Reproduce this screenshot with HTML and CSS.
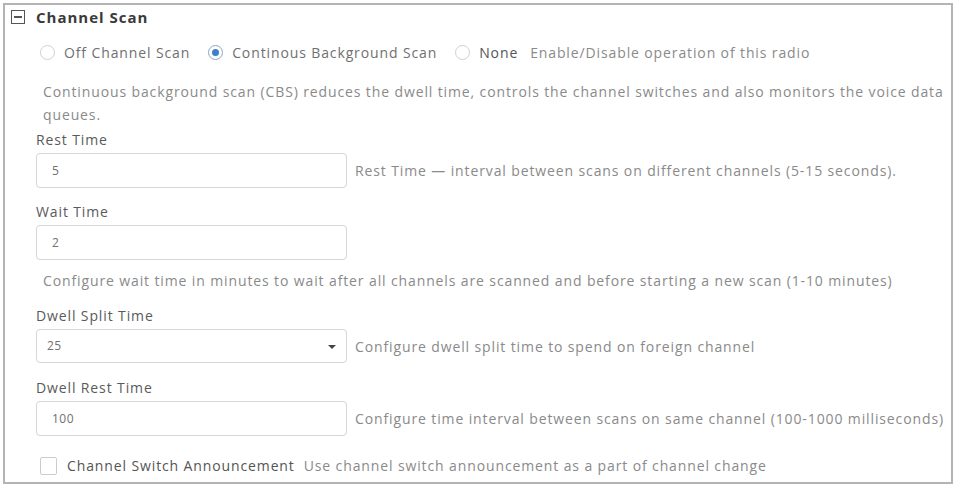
FILE: index.html
```html
<!DOCTYPE html>
<html>
<head>
<meta charset="utf-8">
<link rel="stylesheet" href="styles.css">
</head>
<body>
<div class="panel">
  <div class="header">
    <span class="toggle"><span class="toggle-bar"></span></span>
    <span class="title">Channel Scan</span>
  </div>
  <div class="radio-row">
    <label class="radio"><span class="radio-dot"></span><span class="radio-text">Off Channel Scan</span></label>
    <label class="radio"><span class="radio-dot checked"></span><span class="radio-text">Continous Background Scan</span></label>
    <label class="radio"><span class="radio-dot"></span><span class="radio-text strong">None</span></label>
    <span class="hint">Enable/Disable operation of this radio</span>
  </div>
  <p class="desc">Continuous background scan (CBS) reduces the dwell time, controls the channel switches and also monitors the voice data queues.</p>

  <div class="field">
    <div class="label">Rest Time</div>
    <div class="control-row">
      <div class="input">5</div>
      <span class="hint">Rest Time — interval between scans on different channels (5-15 seconds).</span>
    </div>
  </div>

  <div class="field">
    <div class="label">Wait Time</div>
    <div class="control-row">
      <div class="input">2</div>
    </div>
    <div class="hint below">Configure wait time in minutes to wait after all channels are scanned and before starting a new scan (1-10 minutes)</div>
  </div>

  <div class="field">
    <div class="label">Dwell Split Time</div>
    <div class="control-row">
      <div class="input select">25<span class="caret"></span></div>
      <span class="hint">Configure dwell split time to spend on foreign channel</span>
    </div>
  </div>

  <div class="field">
    <div class="label">Dwell Rest Time</div>
    <div class="control-row">
      <div class="input">100</div>
      <span class="hint">Configure time interval between scans on same channel (100-1000 milliseconds)</span>
    </div>
  </div>

  <div class="check-row">
    <span class="checkbox"></span>
    <span class="radio-text strong">Channel Switch Announcement</span>
    <span class="hint">Use channel switch announcement as a part of channel change</span>
  </div>
</div>
</body>
</html>
```

FILE: styles.css
```css
* { box-sizing: border-box; }
html, body { margin: 0; padding: 0; background: #fff; }
body {
  font-family: "Open Sans", "Liberation Sans", sans-serif;
  font-size: 14px;
  letter-spacing: 0.88px;
  color: #808080;
}
.panel {
  margin: 3px 4px 3px 3px;
  height: 481px;
  border: 2px solid #b4b4b4;
  padding: 0 0 0 31px;
  overflow: hidden;
}
.header {
  display: flex;
  align-items: center;
  height: 24px;
  margin-left: -25px;
}
.toggle {
  width: 14px;
  height: 14px;
  border: 1.5px solid #555;
  display: flex;
  align-items: center;
  justify-content: center;
  margin-right: 11px;
}
.toggle-bar { width: 8px; height: 1.5px; background: #555; }
.title { font-weight: 700; font-size: 15px; letter-spacing: 1px; color: #3a3a3a; }
.radio-row {
  display: flex;
  align-items: center;
  height: 20px;
  margin-top: 13px;
  padding-left: 4px;
}
.radio { display: flex; align-items: center; margin-right: 18px; }
.radio-dot {
  width: 15px;
  height: 15px;
  border-radius: 50%;
  border: 1px solid #d0d0d0;
  margin-right: 9px;
  display: flex;
  align-items: center;
  justify-content: center;
}
.radio-dot.checked { border-color: #8aa7c8; }
.radio-dot.checked::after {
  content: "";
  width: 7px; height: 7px; border-radius: 50%;
  background: #3f7fc4;
}
.radio-text { color: #707070; white-space: nowrap; }
.radio-text.strong { color: #555; }
.radio-row .radio:nth-child(3) { margin-right: 12px; }
.hint { color: #8a8a8a; white-space: nowrap; }
.desc {
  margin: 18px 0 0 7px;
  max-width: 912px;
  line-height: 23px;
  color: #8a8a8a;
}
.field { margin-top: 4px; }
.label { line-height: 20px; color: #5a5a5a; margin-bottom: 3px; }
.field + .field { margin-top: 14px; }
.field + .field + .field { margin-top: 15px; }
.control-row { display: flex; align-items: center; }
.input {
  position: relative;
  width: 311px;
  height: 35px;
  border: 1px solid #d6d6d6;
  border-radius: 4px;
  padding: 0 15px;
  line-height: 33px;
  color: #707070;
  font-size: 12px;
  letter-spacing: 0.5px;
  margin-right: 8px;
  flex: none;
}
.input.select { padding-left: 10px; height: 34px; line-height: 32px; }
.caret {
  position: absolute;
  right: 10px;
  top: 15px;
  width: 0; height: 0;
  border-left: 4px solid transparent;
  border-right: 4px solid transparent;
  border-top: 4px solid #444;
}
.hint.below { margin: 11px 0 0 7px; line-height: 20px; }
.check-row {
  display: flex;
  align-items: center;
  margin-top: 20px;
  padding-left: 4px;
}
.checkbox {
  width: 17px; height: 18px;
  border: 1px solid #ccc;
  border-radius: 2px;
  margin-right: 10px;
}
.check-row .hint { margin-left: 9px; }
```
